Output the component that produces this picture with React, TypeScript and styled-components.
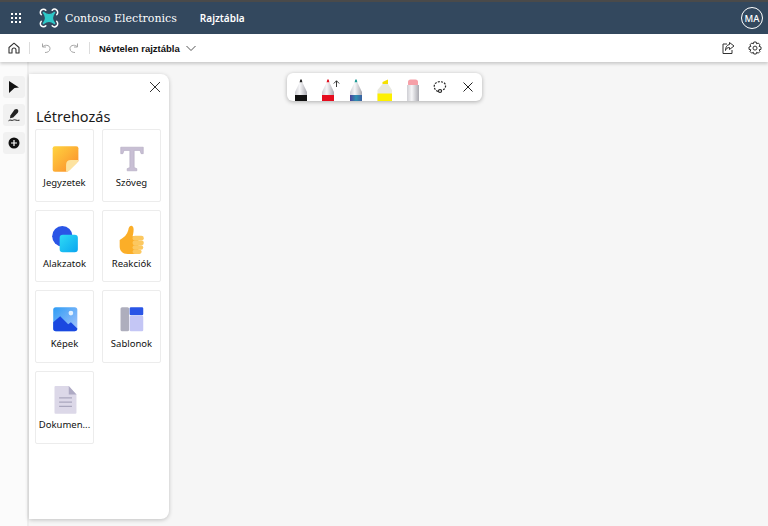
import React from "react";
import styled, { createGlobalStyle } from "styled-components";

const Global = createGlobalStyle`
  html, body { margin: 0; padding: 0; height: 100%; background: #f6f6f6; }
  #root { height: 526px; }
  * { box-sizing: border-box; }
`;

const Page = styled.div`
  width: 768px; height: 526px; display: flex; flex-direction: column; overflow: hidden;
  background: #f6f6f6; font-family: "Noto Sans", "Open Sans", sans-serif; color: #1a1a1a; position: relative;
`;
const Header = styled.header`
  height: 34px; flex: none; background: #33485e; border-top: 2px solid #4a4a4a;
  display: flex; align-items: center; padding: 0 5px 0 10px; color: #fff;
`;
const Waffle = styled.svg` width: 12px; height: 12px; flex: none; `;
const Logo = styled.svg` width: 22px; height: 22px; margin-left: 16px; flex: none; `;
const Brand = styled.span`
  font-family: "DejaVu Serif", serif; font-size: 11px; margin-left: 5px; color: #fff;
`;
const Product = styled.span` font-size: 10px; font-weight: 600; margin-left: 23px; `;
const Avatar = styled.div`
  margin-left: auto; width: 22px; height: 22px; border-radius: 50%; border: 1px solid #fff;
  display: flex; align-items: center; justify-content: center; font-size: 9.5px; font-weight: 500;
`;
const Toolbar = styled.div`
  height: 28px; flex: none; background: #fff; display: flex; align-items: center; padding: 0 6px 0 7px;
  box-shadow: 0 2px 3px rgba(0,0,0,.18); z-index: 2;
`;
const ToolIcon = styled.svg<{ $gap?: number }>`
  width: 14px; height: 14px; flex: none; margin-left: ${(p) => p.$gap ?? 0}px;
`;
const Sep = styled.div<{ $gap: number }>` width: 1px; height: 12px; background: #dcdcdc; margin-left: ${(p) => p.$gap}px; `;
const Title = styled.span` font-family: "Liberation Sans", sans-serif; font-size: 9.5px; font-weight: 700; margin-left: 9px; color: #111; `;
const Spacer = styled.div` flex: 1; `;
const Body = styled.main` flex: 1; display: flex; position: relative; min-height: 0; padding-bottom: 7px; `;
const Rail = styled.nav`
  width: 29px; flex: none; display: flex; flex-direction: column; align-items: flex-start; gap: 6px;
  padding: 14px 0 0 3px; margin-bottom: -7px; background: #fbfbfb; border-right: 2px solid #eeeeee;
`;
const RailButton = styled.button`
  width: 22px; height: 22px; border: 0; padding: 0; border-radius: 3px; background: #f1f1f1;
  display: flex; align-items: center; justify-content: center;
`;
const Panel = styled.section`
  width: 140px; margin-top: 12px; background: #fff; border-radius: 0 8px 8px 0;
  box-shadow: 0 1px 4px rgba(0,0,0,.22); padding: 0 8px 0 6px; display: flex; flex-direction: column;
`;
const CloseRow = styled.div` height: 26px; display: flex; align-items: flex-start; justify-content: flex-end; padding-top: 7px; `;
const PanelTitle = styled.h2` margin: 6px 0 3px 1px; font-size: 14.5px; line-height: 20px; font-weight: 400; color: #1a1a1a; `;
const Grid = styled.div` display: grid; grid-template-columns: 59px 59px; column-gap: 8px; row-gap: 8px; `;
const Card = styled.div`
  height: 72.7px; border: 1px solid #ececec; border-radius: 2px; background: #fff;
  display: flex; flex-direction: column; align-items: center; padding-top: 14px;
`;
const CardLabel = styled.span`
  font-size: 9.5px; line-height: 13px; margin-top: 2px; color: #111; white-space: nowrap;
`;
const CardIcon = styled.svg` width: 30px; height: 30px; flex: none; `;
const Floating = styled.div`
  position: absolute; left: 287px; top: 11px; width: 195px; height: 28px; background: #fff; border-radius: 6px;
  box-shadow: 0 1px 4px rgba(0,0,0,.3); display: flex; align-items: flex-end; padding-left: 6px;
`;
const Pen = styled.svg<{ $ml?: number }>` width: 16px; height: 22px; flex: none; margin-left: ${(p) => p.$ml ?? 0}px; `;
const FloatAction = styled.svg<{ $ml: number }>` width: 14px; height: 14px; flex: none; align-self: center; margin-left: ${(p) => p.$ml}px; `;
const PenArrow = styled.svg` position: absolute; left: 46px; top: 7px; width: 7px; height: 7px; `;

const PenDefs = () => (
  <svg width="0" height="0" style={{ position: "absolute" }}>
    <defs>
      <linearGradient id="penBody" x1="0" y1="0" x2="1" y2="0">
        <stop offset="0" stopColor="#cfcfd4" />
        <stop offset=".4" stopColor="#f6f6f8" />
        <stop offset="1" stopColor="#a9a9b0" />
      </linearGradient>
      <linearGradient id="penTeal" x1="0" y1="0" x2="1" y2="0">
        <stop offset="0" stopColor="#4b3f9a" />
        <stop offset=".5" stopColor="#2f8fb0" />
        <stop offset="1" stopColor="#3a5fa0" />
      </linearGradient>
    </defs>
  </svg>
);

const Marker = ({ tip, band, ml }: { tip: string; band: string; ml?: number }) => (
  <Pen viewBox="0 0 16 22" $ml={ml}>
    <path d="M6.6 3.5 L7.3 0.5 L8.7 0.5 L9.4 3.5Z" fill={tip} />
    <path d="M6.6 3.5 L9.4 3.5 L14 13 V22 H2 V13Z" fill="url(#penBody)" />
    <rect x="2" y="16" width="12" height="6" fill={band} />
  </Pen>
);

export default function App() {
  return (
    <Page>
      <Global />
      <PenDefs />
      <Header>
        <Waffle viewBox="0 0 12 12" fill="#fff">
          {[1, 5, 9].flatMap((y) => [1, 5, 9].map((x) => <rect key={`${x}${y}`} x={x} y={y} width="2" height="2" />))}
        </Waffle>
        <Logo viewBox="0 0 22 22">
          <path d="M5.5 5.5 Q11 10 16.5 5.5 Q12 11 16.5 16.5 Q11 12 5.5 16.5 Q10 11 5.5 5.5Z" fill="#2fc8c8" stroke="#2fc8c8" strokeWidth="1.6" strokeLinejoin="round" />
          <path d="M3.2 7.6 A3 3 0 1 1 7.8 3.2 M14.2 3.2 A3 3 0 1 1 18.8 7.6 M18.8 14.4 A3 3 0 1 1 14.2 18.8 M7.8 18.8 A3 3 0 1 1 3.2 14.4" fill="none" stroke="#fff" strokeWidth="1.5" strokeLinecap="round" />
        </Logo>
        <Brand>Contoso Electronics</Brand>
        <Product>Rajztábla</Product>
        <Avatar>MA</Avatar>
      </Header>
      <Toolbar>
        <ToolIcon viewBox="0 0 14 14" fill="none" stroke="#333" strokeWidth="1.1">
          <path d="M2 6.5 L7 2.2 L12 6.5 V12 H9 V9 A2 2 0 0 0 5 9 V12 H2Z" strokeLinejoin="round" />
        </ToolIcon>
        <Sep $gap={8} />
        <ToolIcon $gap={9} viewBox="0 0 14 14" fill="none" stroke="#a6a6a6" strokeWidth="1">
          <path d="M3.5 2.5 V6 H7 M3.5 6 C5 3.5 11 3.5 11 7.5 C11 10.5 8.5 11.5 6 11.5" />
        </ToolIcon>
        <ToolIcon $gap={14} viewBox="0 0 14 14" fill="none" stroke="#a6a6a6" strokeWidth="1">
          <path d="M10.5 2.5 V6 H7 M10.5 6 C9 3.5 3 3.5 3 7.5 C3 10.5 5.5 11.5 8 11.5" />
        </ToolIcon>
        <Sep $gap={8} />
        <Title>Névtelen rajztábla</Title>
        <ToolIcon $gap={4} viewBox="0 0 14 14" fill="none" stroke="#555" strokeWidth="1">
          <path d="M2.5 5 L7 9.5 L11.5 5" />
        </ToolIcon>
        <Spacer />
        <ToolIcon viewBox="0 0 14 14" fill="none" stroke="#333" strokeWidth="1">
          <path d="M6 3 H2 V12.5 H11 V9" />
          <path d="M8.5 1.5 L13 5 L8.5 8.5 V6.5 C6.5 6.5 5 7.5 4.5 9.5 C4.5 6 6 3.8 8.5 3.5Z" strokeLinejoin="round" />
        </ToolIcon>
        <ToolIcon $gap={13} viewBox="0 0 14 14" fill="none" stroke="#333" strokeWidth="1">
          <path d="M5.8 1 H8.2 L8.6 2.8 L10.3 2 L12 3.8 L11.1 5.4 L13 6 V8.4 L11.1 8.8 L12 10.4 L10.3 12.2 L8.6 11.3 L8.2 13 H5.8 L5.4 11.3 L3.7 12.2 L2 10.4 L2.9 8.8 L1 8.4 V6 L2.9 5.4 L2 3.8 L3.7 2 L5.4 2.8Z" strokeLinejoin="round" />
          <circle cx="7" cy="7.1" r="2" />
        </ToolIcon>
      </Toolbar>
      <Body>
        <Rail>
          <RailButton aria-label="Kijelölés">
            <svg width="12" height="14" viewBox="0 0 12 14"><path d="M1 1 L11 7.5 L6.5 8 L1 13Z" fill="#111" /></svg>
          </RailButton>
          <RailButton aria-label="Toll">
            <svg width="14" height="14" viewBox="0 0 14 14" fill="none">
              <path d="M3.4 7.4 L7.6 1.6 Q9.4 0.2 10.8 1.6 Q12 3.2 10.8 4.8 L6.2 9.6 L3 10.2Z" fill="#222" />
              <path d="M1.5 12.8 C3.5 10.8 4.5 13.4 6.5 12 C8 11.2 9.5 13 12.5 12.2" stroke="#222" strokeWidth="1" />
            </svg>
          </RailButton>
          <RailButton aria-label="Hozzáadás">
            <svg width="12" height="12" viewBox="0 0 12 12">
              <circle cx="6" cy="6" r="5.5" fill="#111" />
              <path d="M6 3 V9 M3 6 H9" stroke="#fff" strokeWidth="1.2" />
            </svg>
          </RailButton>
        </Rail>
        <Panel>
          <CloseRow>
            <svg width="12" height="12" viewBox="0 0 12 12" stroke="#333" strokeWidth="1"><path d="M1 1 L11 11 M11 1 L1 11" /></svg>
          </CloseRow>
          <PanelTitle>Létrehozás</PanelTitle>
          <Grid>
            <Card>
              <CardIcon viewBox="0 0 28 28">
                <defs>
                  <linearGradient id="note" x1="0" y1="0" x2="1" y2="1"><stop offset="0" stopColor="#ffd43f" /><stop offset="1" stopColor="#fb8a2c" /></linearGradient>
                </defs>
                <path d="M2.5 4 Q2.5 2 4.5 2 H24.5 Q26.5 2 26.5 4 V16 L16 26 H4.5 Q2.5 26 2.5 24Z" fill="url(#note)" />
                <path d="M26.5 15 Q26.5 16.5 25 18 L18.5 24.5 Q17 26 15 26 L15 19.5 Q15 15 19.5 15Z" fill="#fde3a0" />
              </CardIcon>
              <CardLabel>Jegyzetek</CardLabel>
            </Card>
            <Card>
              <CardIcon viewBox="0 0 28 28">
                <path d="M3.5 3 H24.5 V9 H22.5 L21.5 6 H16 V22 L18.5 23 V25 H9.5 V23 L12 22 V6 H6.5 L5.5 9 H3.5Z" fill="#c8bfd4" stroke="#b4aac2" strokeWidth=".6" strokeLinejoin="round" />
              </CardIcon>
              <CardLabel>Szöveg</CardLabel>
            </Card>
            <Card>
              <CardIcon viewBox="0 0 28 28">
                <defs>
                  <linearGradient id="sq" x1="0" y1="0" x2="1" y2="1"><stop offset="0" stopColor="#2fdcf5" /><stop offset="1" stopColor="#0aa5f0" /></linearGradient>
                </defs>
                <circle cx="11.5" cy="10.5" r="9.5" fill="#2a55e6" />
                <rect x="9" y="9" width="17" height="16.5" rx="3" fill="url(#sq)" />
              </CardIcon>
              <CardLabel>Alakzatok</CardLabel>
            </Card>
            <Card>
              <CardIcon viewBox="0 0 28 28">
                <path d="M2.5 14 C6.5 12 9.5 9 10.5 5 C11 -0.5 15.5 -0.5 15.5 4 C15.5 7 15 9 14.5 10.5 H20 V27 H10 C5 27 2.5 24 2.5 20Z" fill="#fbae28" />
                <rect x="14.5" y="10" width="10.5" height="4.5" rx="2.2" fill="#fcc860" />
                <rect x="14.5" y="14.5" width="10.5" height="4.3" rx="2.1" fill="#fcc860" />
                <rect x="14.5" y="18.8" width="10" height="4.2" rx="2.1" fill="#fcc860" />
                <rect x="14.5" y="23" width="8.5" height="4" rx="2" fill="#fcc860" />
              </CardIcon>
              <CardLabel>Reakciók</CardLabel>
            </Card>
            <Card>
              <CardIcon viewBox="0 0 28 28">
                <defs>
                  <linearGradient id="pic" x1="0" y1="0" x2="1" y2="1"><stop offset="0" stopColor="#2d9cf5" /><stop offset="1" stopColor="#a9c4fb" /></linearGradient>
                </defs>
                <rect x="3" y="2" width="22.5" height="22.5" rx="2.5" fill="url(#pic)" />
                <circle cx="19.5" cy="7.5" r="2.2" fill="#e4f1ff" />
                <path d="M3 16 L9.5 10.5 L17 18 L19.5 16 L25.5 22 Q25.5 24.5 23 24.5 H5.5 Q3 24.5 3 22Z" fill="#1a48e0" />
              </CardIcon>
              <CardLabel>Képek</CardLabel>
            </Card>
            <Card>
              <CardIcon viewBox="0 0 28 28">
                <rect x="3.3" y="2" width="8" height="22.5" rx="1.5" fill="#aeaebd" />
                <rect x="11.8" y="2" width="12.7" height="7.5" rx="1.2" fill="#2a55e6" />
                <rect x="11.8" y="10" width="12.7" height="14.5" rx="1.2" fill="#c4c6f5" />
              </CardIcon>
              <CardLabel>Sablonok</CardLabel>
            </Card>
            <Card>
              <CardIcon viewBox="0 0 28 28">
                <path d="M4.2 1 Q4.2 0 5.2 0 H17.5 L24.7 8 V25 Q24.7 26 23.7 26 H5.2 Q4.2 26 4.2 25Z" fill="#dcd8e8" />
                <path d="M17.5 0 L24.7 8 H17.5Z" fill="#aeaac4" />
                <path d="M8.5 11 H20.5 M8.5 15 H20.5 M8.5 19 H20.5" stroke="#a9a6bd" strokeWidth="1.2" />
              </CardIcon>
              <CardLabel>Dokumen...</CardLabel>
            </Card>
          </Grid>
        </Panel>
        <Floating>
          <Marker tip="#222" band="#111" />
          <Marker ml={11} tip="#e01020" band="#e50c1e" />
          <PenArrow viewBox="0 0 7 7" fill="none" stroke="#222" strokeWidth=".9"><path d="M3.5 7 V0.8 M0.8 3.5 L3.5 0.8 L6.2 3.5" /></PenArrow>
          <Marker ml={12} tip="#1d9a96" band="url(#penTeal)" />
          <Pen $ml={13} viewBox="0 0 16 22">
            <path d="M5.5 3 L11 0.5 V5 H5.5Z" fill="#f5e000" />
            <path d="M5.5 5 H11 L15 11 V22 H0.5 V11Z" fill="#e8e8e0" />
            <rect x="0.5" y="14.5" width="14.5" height="7.5" fill="#fdf000" />
          </Pen>
          <Pen $ml={12} viewBox="0 0 16 22">
            <rect x="3" y="0.5" width="10" height="7" rx="2.5" fill="#f6a0a8" />
            <rect x="2" y="6" width="12" height="16" fill="url(#penBody)" />
          </Pen>
          <FloatAction $ml={12} viewBox="0 0 14 14" fill="none" stroke="#222" strokeWidth="1.2">
            <path d="M5 11.5 C1 10 0.5 6 2 3.8 C4 1 10 1 12 3.8 C13.5 6.5 12 9.5 8.5 10.5" strokeDasharray="2 1.2" />
            <circle cx="7" cy="11" r="1.5" />
          </FloatAction>
          <FloatAction $ml={14} viewBox="0 0 14 14" stroke="#222" strokeWidth="1"><path d="M2.5 2.5 L11.5 11.5 M11.5 2.5 L2.5 11.5" /></FloatAction>
        </Floating>
      </Body>
    </Page>
  );
}
